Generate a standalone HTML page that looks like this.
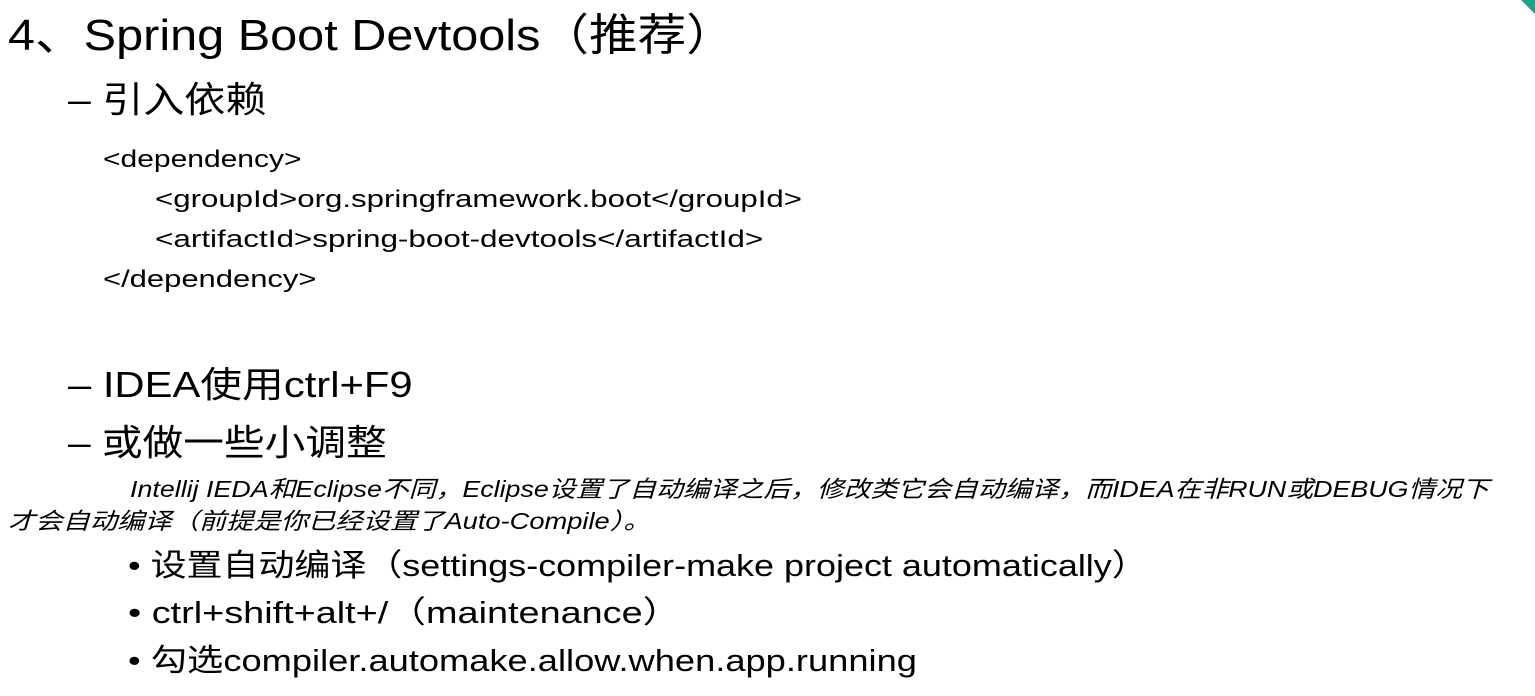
<!DOCTYPE html>
<html><head><meta charset="utf-8">
<style>
html,body{margin:0;padding:0;background:#fff;width:1535px;height:696px;overflow:hidden;position:relative}
div{position:absolute;white-space:nowrap;color:#000;font-family:"Liberation Sans","Noto Sans CJK SC",sans-serif;line-height:1;transform-origin:0 0}
.t{font-size:44px;left:8px;top:14px;transform:scaleX(1.105)}
.s{font-size:36px;left:68px}
.c{font-size:24px}
.i{font-size:23px;font-style:italic}
.b{font-size:31px;left:128px}
.corner{position:absolute;right:0;top:0;width:0;height:0;border-top:14px solid #1aa58a;border-left:14px solid transparent}
</style></head><body>
<div class="corner"></div>
<div class="t">4、Spring Boot Devtools（推荐）</div>
<div class="s" style="top:82px;transform:scaleX(1.14)">– 引入依赖</div>
<div class="c" style="left:103px;top:148px;transform:scaleX(1.25)">&lt;dependency&gt;</div>
<div class="c" style="left:155px;top:188px;transform:scaleX(1.30)">&lt;groupId&gt;org.springframework.boot&lt;/groupId&gt;</div>
<div class="c" style="left:155px;top:228px;transform:scaleX(1.31)">&lt;artifactId&gt;spring-boot-devtools&lt;/artifactId&gt;</div>
<div class="c" style="left:103px;top:268px;transform:scaleX(1.29)">&lt;/dependency&gt;</div>
<div class="s" style="top:367px;transform:scaleX(1.16)">– IDEA使用ctrl+F9</div>
<div class="s" style="top:425px;transform:scaleX(1.13)">– 或做一些小调整</div>
<div class="i" style="left:130px;top:478px;transform:scaleX(1.166)">Intellij IEDA和Eclipse不同，Eclipse设置了自动编译之后，修改类它会自动编译，而IDEA在非RUN或DEBUG情况下</div>
<div class="i" style="left:8px;top:510px;transform:scaleX(1.186)">才会自动编译（前提是你已经设置了Auto-Compile）。</div>
<div class="b" style="top:550px;transform:scaleX(1.16)">• 设置自动编译（settings-compiler-make project automatically）</div>
<div class="b" style="top:597px;transform:scaleX(1.22)">• ctrl+shift+alt+/（maintenance）</div>
<div class="b" style="top:645px;transform:scaleX(1.17)">• 勾选compiler.automake.allow.when.app.running</div>
</body></html>
